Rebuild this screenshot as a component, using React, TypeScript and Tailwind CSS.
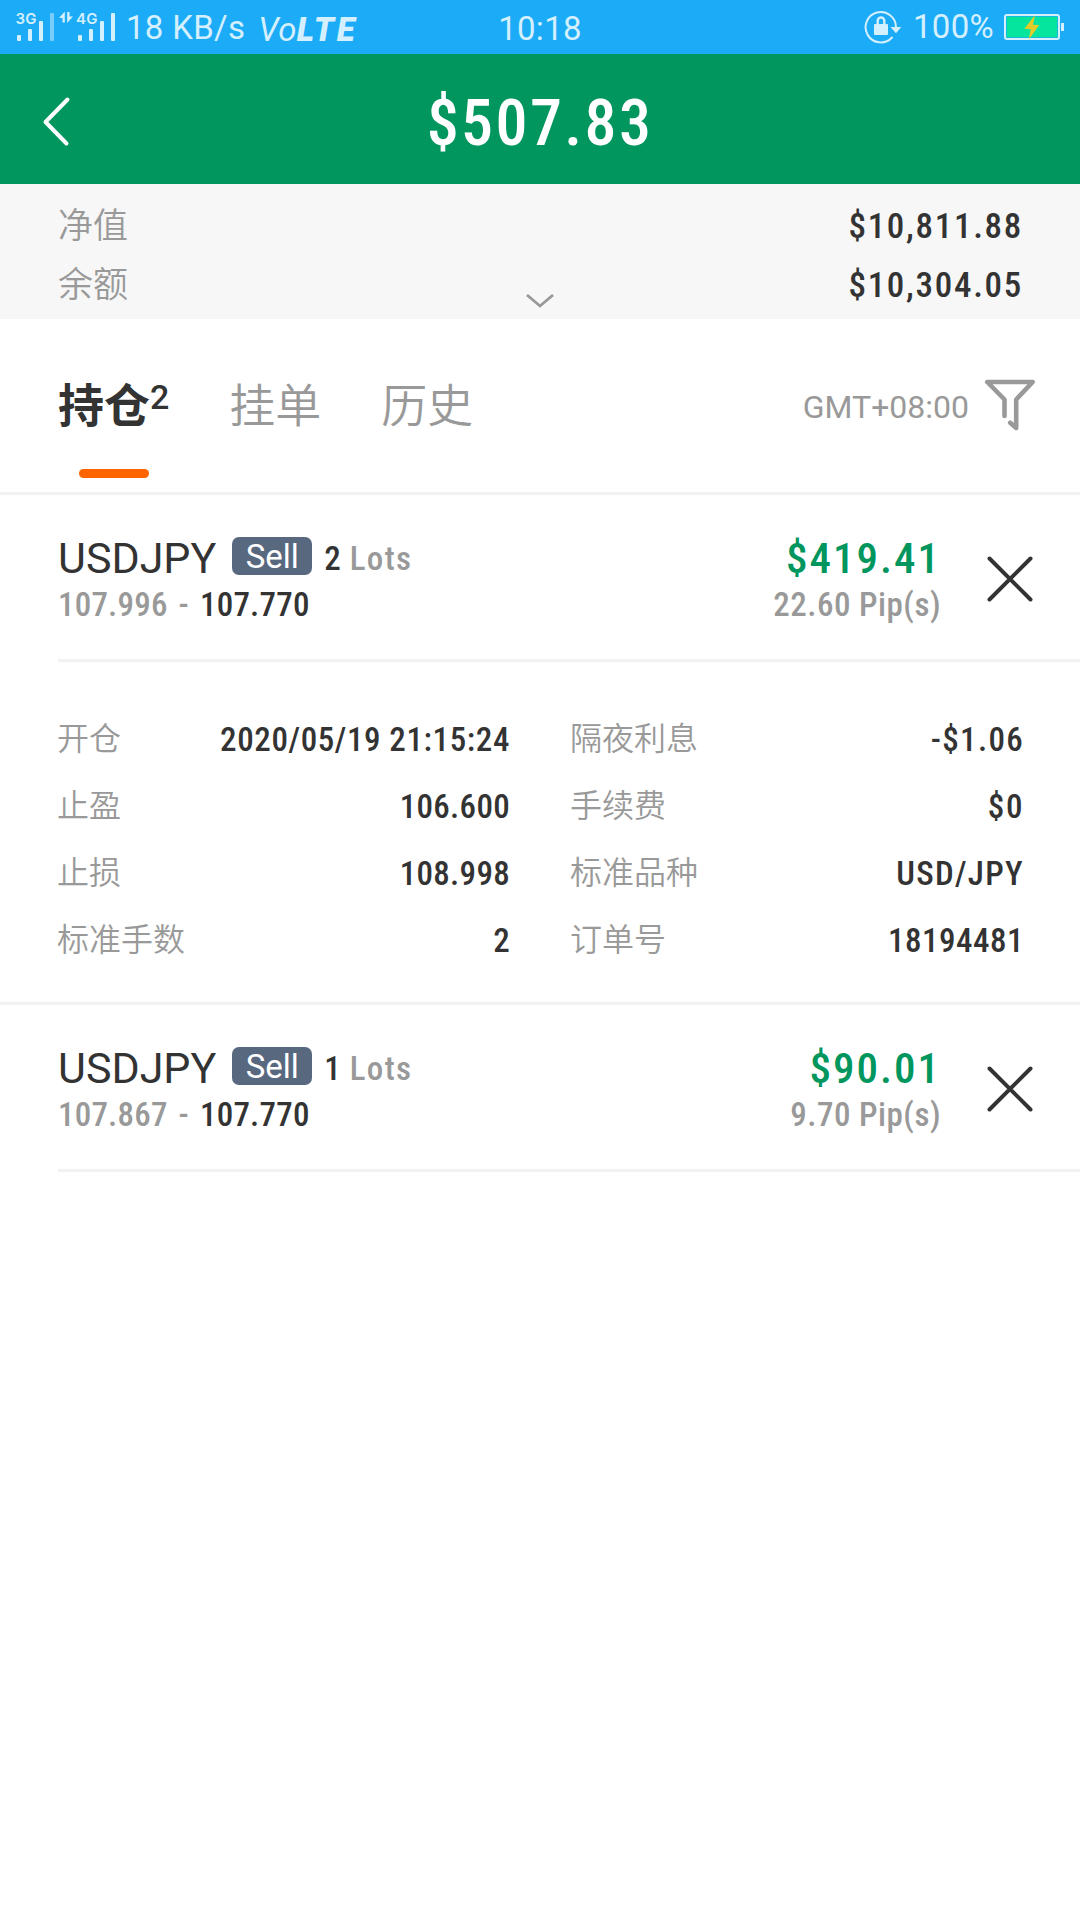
import React from 'react';

interface Position {
  symbol: string;
  lots: string;
  open: string;
  current: string;
  profit: string;
  pips: string;
}

interface Detail {
  label: string;
  value: string;
  tracking: string;
}

const POSITIONS: Position[] = [
  { symbol: 'USDJPY', lots: '2', open: '107.996', current: '107.770', profit: '$419.41', pips: '22.60 Pip(s)' },
  { symbol: 'USDJPY', lots: '1', open: '107.867', current: '107.770', profit: '$90.01', pips: '9.70 Pip(s)' },
];

const DETAILS_LEFT: Detail[] = [
  { label: '开仓', value: '2020/05/19 21:15:24', tracking: 'tracking-[0.6px]' },
  { label: '止盈', value: '106.600', tracking: 'tracking-[0.3px]' },
  { label: '止损', value: '108.998', tracking: 'tracking-[0.3px]' },
  { label: '标准手数', value: '2', tracking: 'tracking-[0.3px]' },
];

const DETAILS_RIGHT: Detail[] = [
  { label: '隔夜利息', value: '-$1.06', tracking: 'tracking-[1.3px]' },
  { label: '手续费', value: '$0', tracking: 'tracking-[1.6px]' },
  { label: '标准品种', value: 'USD/JPY', tracking: 'tracking-[1.3px]' },
  { label: '订单号', value: '18194481', tracking: 'tracking-[0.5px]' },
];

const SignalIcons = () => (
  <svg width="104" height="38" viewBox="13 6 104 38" fill="#d4effd">
    <text x="15.5" y="24" fontSize="15" fontWeight="600" fontFamily="Inter, sans-serif">3G</text>
    <rect x="17" y="35" width="4" height="6" rx="1" />
    <rect x="28" y="29" width="4" height="12" rx="1" />
    <rect x="39" y="21" width="4" height="20" rx="1" />
    <rect x="50" y="13" width="4" height="28" rx="1" opacity="0.5" />
    <path d="M64.8 11.5v11h-2.3v-4.5h-3.5zM67.2 23v-11h2.3v4.5h3.5z" />
    <text x="76" y="24" fontSize="15" fontWeight="600" fontFamily="Inter, sans-serif">4G</text>
    <rect x="78" y="35" width="4" height="6" rx="1" />
    <rect x="89" y="29" width="4" height="12" rx="1" />
    <rect x="100" y="21" width="4" height="20" rx="1" />
    <rect x="111" y="13" width="4" height="28" rx="1" />
  </svg>
);

const RotationLockIcon = () => (
  <svg width="38" height="34" viewBox="864 10 38 34" fill="none">
    <path d="M892 37.5A15.2 15.2 0 1 1 896 27.5" stroke="#d4effd" strokeWidth="2" strokeLinecap="round" />
    <path d="M890.5 27h10.8l-5.3 6.2z" fill="#d4effd" />
    <rect x="874" y="24" width="14" height="11" rx="1" fill="#d4effd" />
    <path d="M877.7 25v-4.2a3.3 3.3 0 0 1 6.6 0v4.2" stroke="#d4effd" strokeWidth="2.4" />
  </svg>
);

const BatteryIcon = () => (
  <svg width="60" height="28" viewBox="1004 13 60 28" fill="none">
    <rect x="1005" y="15" width="54" height="24" rx="2" stroke="#d4effd" strokeWidth="2" />
    <rect x="1006.7" y="16.7" width="50.6" height="20.6" fill="#05e59d" />
    <rect x="1061" y="23" width="3" height="8" fill="#d4effd" />
    <path d="M1035 15l-10.7 13.7 6.4.6-2 10.4 10.6-14.7-6.3-.3z" fill="#e3cb2a" />
  </svg>
);

const FilterIcon = () => (
  <svg className="mb-[2px]" width="52" height="54" viewBox="984 378 52 54" fill="none" stroke="#999999" strokeWidth="4.6" strokeLinecap="round" strokeLinejoin="round">
    <path d="M1004.5 416v-16.5L987.3 382h45.4L1016.2 399.5V428l-6-5.2" />
  </svg>
);

const CloseIcon = () => (
  <svg width="48" height="48" viewBox="0 0 48 48" stroke="#333333" strokeWidth="4" strokeLinecap="round">
    <path d="M3.5 3.5l41 41M44.5 3.5l-41 41" />
  </svg>
);

const StatusBar = () => (
  <div className="h-[54px] bg-[#1cabf7] text-[#d4effd] text-[33px] leading-none tracking-[0.3px] grid grid-cols-[1fr_auto_1fr] items-center">
    <div className="flex items-center pl-[13px]">
      <span className="mt-[-4px]">
        <SignalIcons />
      </span>
      <span className="ml-[9px]">18 KB/s</span>
      <span className="ml-[13px] mt-1 italic">
        Vo<span className="font-black tracking-[2.8px]">LTE</span>
      </span>
    </div>
    <span className="pt-[2px]">10:18</span>
    <div className="flex items-center justify-end pr-4">
      <RotationLockIcon />
      <span className="ml-[11px] mr-px mb-[2px]">100%</span>
      <span className="ml-[9px]">
        <BatteryIcon />
      </span>
    </div>
  </div>
);

const Header = () => (
  <div className="h-[130px] bg-[#00965e] grid grid-cols-[1fr_auto_1fr] items-center">
    <svg className="ml-[41px] mt-1" width="32" height="52" viewBox="0 0 32 52" fill="none" stroke="white" strokeWidth="4" strokeLinecap="round" strokeLinejoin="round">
      <path d="M26.5 4.5L4.5 27L25.5 48.5" />
    </svg>
    <h1 className="pt-[9px] text-[64px] leading-none font-medium font-stretch-75% tracking-[2.4px] text-white">$507.83</h1>
  </div>
);

const SummaryRow = ({ label, value }: { label: string; value: string }) => (
  <div className="h-[59px] flex items-center justify-between pl-[58px] pr-[57px] text-[35px] leading-none">
    <span className="font-['Noto_Sans_CJK_SC',sans-serif] font-[350] text-[#999999] pb-[6px]">{label}</span>
    <span className="pt-[2px] font-medium font-stretch-75% tracking-[1.7px]">{value}</span>
  </div>
);

const Tabs = () => (
  <div className="h-[176px] border-b-[3px] border-[#f2f2f2] flex items-center justify-between pl-[58px] pr-11">
    <div className="h-full flex items-center gap-[60px] text-[46px] leading-none font-['Noto_Sans_CJK_SC',sans-serif] text-[#999999]">
      <div className="relative h-full flex items-center text-[#333333]">
        <span className="font-bold pb-[7px]">持仓</span>
        <span className="font-['Roboto'] font-medium text-[34px] mb-[17px]">2</span>
        <span className="absolute bottom-[14px] left-[21px] w-[70px] h-[9px] rounded-full bg-[#ff6400]" />
      </div>
      <span className="font-[350] pb-[7px]">挂单</span>
      <span className="font-[350] pb-[7px]">历史</span>
    </div>
    <div className="flex items-center text-[32px] leading-none text-[#999999]">
      <span className="pt-[2px] mr-[15px]">GMT+08:00</span>
      <FilterIcon />
    </div>
  </div>
);

const PositionRow = ({ position }: { position: Position }) => (
  <div className="h-[167px] ml-[58px] pr-[46px] border-b-[3px] border-[#f2f2f2] flex">
    <div className="flex-1 pt-[39px]">
      <div className="h-[47px] flex items-center leading-none">
        <span className="pt-[2px] text-[43px]">{position.symbol}</span>
        <span className="w-20 h-[38px] ml-4 mb-[3px] rounded-[7px] bg-[#57687f] text-white text-[33px] flex items-center justify-center">
          Sell
        </span>
        <span className="ml-[12px] pt-px text-[33px] font-medium font-stretch-75%">{position.lots}</span>
        <span className="ml-[9px] pt-px text-[33px] font-medium font-stretch-75% tracking-[1.3px] text-[#999999]">Lots</span>
      </div>
      <div className="h-[47px] flex items-center gap-[11px] text-[33px] leading-none font-medium font-stretch-75% tracking-[0.2px]">
        <span className="text-[#999999]">{position.open}</span>
        <span className="text-[#999999]">-</span>
        <span>{position.current}</span>
      </div>
    </div>
    <div className="pt-[39px] text-right font-medium font-stretch-75%">
      <div className="h-[47px] leading-[48px] text-[43px] tracking-[2px] text-[#00965e]">{position.profit}</div>
      <div className="h-[47px] leading-[47px] text-[33px] tracking-[0.5px] text-[#999999]">{position.pips}</div>
    </div>
    <div className="ml-[45px] pt-[60px]">
      <CloseIcon />
    </div>
  </div>
);

const DetailColumn = ({ items }: { items: Detail[] }) => (
  <div>
    {items.map((item) => (
      <div key={item.label} className="h-[67px] flex items-center justify-between leading-none">
        <span className="font-['Noto_Sans_CJK_SC',sans-serif] font-[350] text-[32px] text-[#999999] pb-[6px]">{item.label}</span>
        <span className={`pt-px text-[33px] font-medium font-stretch-75% ${item.tracking}`}>{item.value}</span>
      </div>
    ))}
  </div>
);

const App: React.FC = () => {
  return (
    <div className="w-full min-h-screen bg-white font-['Roboto',sans-serif] text-[#333333]">
      <StatusBar />
      <Header />

      {/* Equity / balance */}
      <div className="relative h-[135px] pt-3 bg-[#f7f7f7]">
        <SummaryRow label="净值" value="$10,811.88" />
        <SummaryRow label="余额" value="$10,304.05" />
        <svg className="absolute left-[525px] bottom-[11px]" width="30" height="14" viewBox="0 0 30 14" fill="none" stroke="#999999" strokeWidth="2.8">
          <path d="M2 1L15 12L28 1" />
        </svg>
      </div>

      <Tabs />

      <PositionRow position={POSITIONS[0]} />
      <div className="h-[343px] pt-[43px] pl-[57px] pr-14 border-b-[3px] border-[#f2f2f2] grid grid-cols-[453px_454px] gap-x-[60px]">
        <DetailColumn items={DETAILS_LEFT} />
        <DetailColumn items={DETAILS_RIGHT} />
      </div>
      <PositionRow position={POSITIONS[1]} />
    </div>
  );
};

export default App;
